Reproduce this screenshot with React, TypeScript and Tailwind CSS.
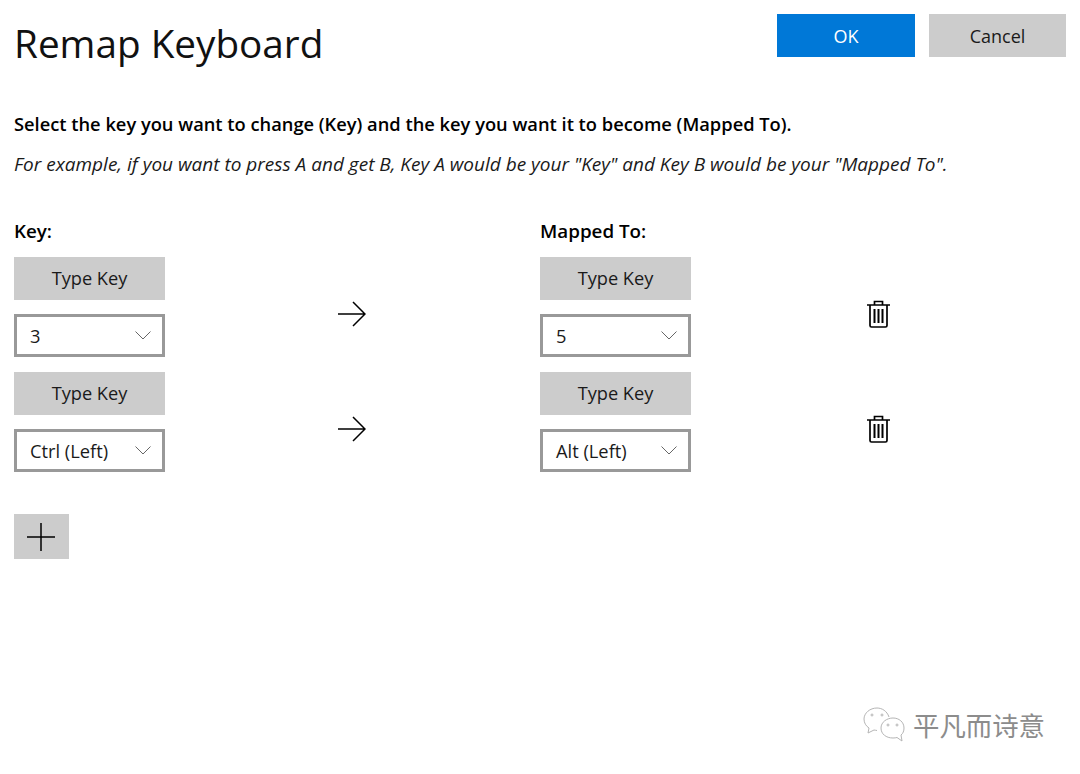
import React from 'react';

const font = { fontFamily: '"Open Sans", "Noto Sans", sans-serif' };

const rows = [
  { from: '3', to: '5' },
  { from: 'Ctrl (Left)', to: 'Alt (Left)' },
];

const TypeKey = () => (
  <div className="flex h-[43px] w-[151px] items-center justify-center bg-[#cccccc] pt-[1px] text-[18.2px] text-[#1a1a1a]">Type Key</div>
);

const Dropdown = ({ value }: { value: string }) => (
  <div className="flex h-[43px] w-[151px] items-center justify-between border-[3px] border-[#999999] bg-white pl-[13px] pr-[11px] text-[18.3px] text-[#1a1a1a]">
    <span className="pt-[1px]">{value}</span>
    <svg width="16" height="9" viewBox="0 0 16 9" fill="none" stroke="#666666" strokeWidth="1">
      <path d="M.5.5l7.500 7.500 7.500-7.500" />
    </svg>
  </div>
);

const KeyColumn = ({ value }: { value: string }) => (
  <div className="flex w-[151px] flex-col gap-[14px]">
    <TypeKey />
    <Dropdown value={value} />
  </div>
);

const Arrow = () => (
  <svg width="28" height="26" viewBox="0 0 28 26" fill="none" stroke="#000000" strokeWidth="1.5">
    <path d="M0 13h27M15 1l12 12-12 12" />
  </svg>
);

const Trash = () => (
  <svg width="23" height="28" viewBox="0 0 23 28" fill="none" stroke="#000000" strokeWidth="1.7">
    <path d="M0 5h23M3 5v20.5a1.5 1.5 0 0 0 1.5 1.5h14a1.5 1.5 0 0 0 1.5-1.5V5M7.5 5V1.5h8V5" />
    <path d="M7.5 9v14M11.5 9v14M15.5 9v14" strokeWidth="2" />
  </svg>
);

export default function App() {
  return (
    <div className="relative h-[774px] w-[1080px] overflow-hidden bg-white px-[14px] pt-[14px] text-black" style={font}>
      {/* Header */}
      <div className="flex items-start justify-between">
        <h1 className="text-[38.7px] leading-[58px] font-normal text-[#111111]">Remap Keyboard</h1>
        <div className="flex gap-[14px]">
          <button className="h-[43px] w-[138px] bg-[#0078d7] pt-[1px] text-[18px] text-white">OK</button>
          <button className="h-[43px] w-[137px] bg-[#cccccc] pt-[1px] text-[18px] text-[#1a1a1a]">Cancel</button>
        </div>
      </div>

      {/* Description */}
      <p className="mt-[40px] text-[18.3px] leading-[24px] font-semibold text-black">
        Select the key you want to change (Key) and the key you want it to become (Mapped To).
      </p>
      <p className="mt-[16px] text-[19px] leading-[24px] text-[#1a1a1a] italic">
        For example, if you want to press A and get B, Key A would be your "Key" and Key B would be your "Mapped To".
      </p>

      {/* Column labels */}
      <div className="mt-[43px] flex text-[18.8px] leading-[24px] font-semibold">
        <div className="w-[526px]">Key:</div>
        <div>Mapped To:</div>
      </div>

      {/* Mapping rows */}
      <div className="mt-[14px] flex flex-col gap-[15px]">
        {rows.map((row) => (
          <div key={row.from} className="flex">
            <KeyColumn value={row.from} />
            <div className="flex w-[375px] items-center pt-[14px] pl-[173px]">
              <Arrow />
            </div>
            <KeyColumn value={row.to} />
            <div className="flex items-center pt-[14px] pl-[176px]">
              <Trash />
            </div>
          </div>
        ))}
      </div>

      {/* Add button */}
      <button className="mt-[42px] flex h-[45px] w-[55px] items-center justify-center bg-[#cccccc]">
        <svg width="28" height="28" viewBox="0 0 28 28" fill="none" stroke="#000000" strokeWidth="1.5" className="-ml-[1px]">
          <path d="M0 14h28M14 0v28" />
        </svg>
      </button>

      {/* Watermark */}
      <div className="absolute top-[706px] left-[863px] flex items-center gap-[6px]">
        <svg width="44" height="38" viewBox="0 0 44 38" fill="none" stroke="#b5b5b5" strokeWidth="1">
          <path d="M26 11C24 5 19 2 14 2 7 2 1 7 1 13c0 4 2 7 5 9l-1 5 6-3c1 0 2 .5 3 .5" />
          <path d="M41 22c0-6-5-10-11-10s-12 4-12 10 5 10 12 10c1.500 0 3-.2 4-.5l5 3.500-1-6c2-1.500 3-4 3-7z" />
          <circle cx="9" cy="9" r="1" />
          <circle cx="19" cy="9" r="1" />
          <circle cx="25" cy="19" r="1" />
          <circle cx="34" cy="19" r="1" />
        </svg>
        <span className="text-[26.4px] leading-[36px] text-[#8c8c8c]" style={{ fontFamily: '"Noto Sans CJK SC", sans-serif' }}>平凡而诗意</span>
      </div>
    </div>
  );
}
